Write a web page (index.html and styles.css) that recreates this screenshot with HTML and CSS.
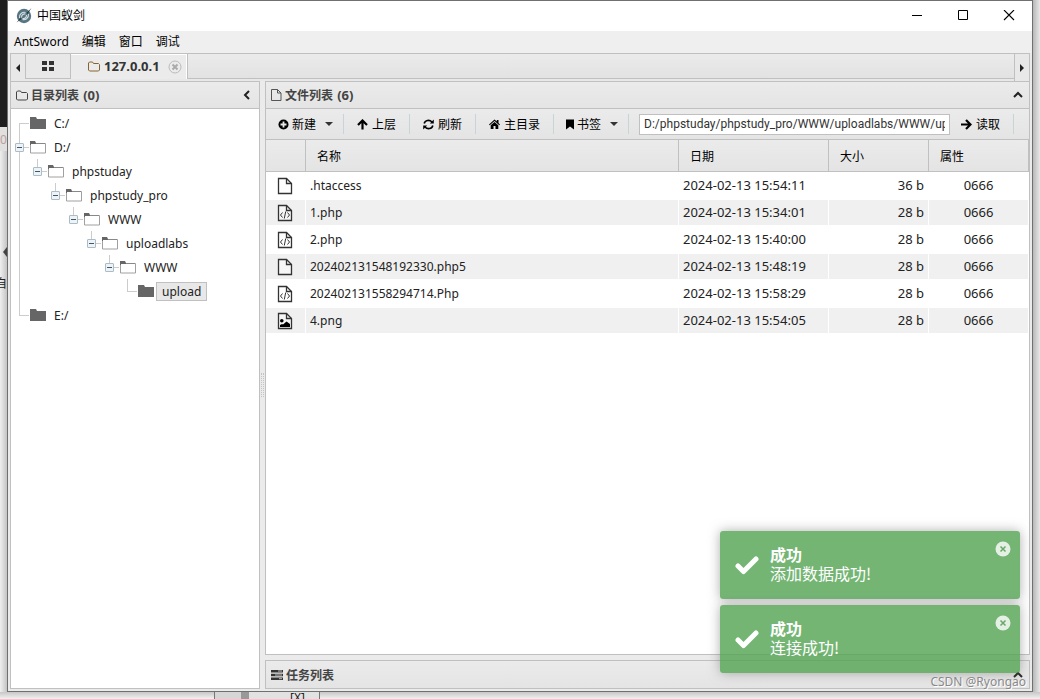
FILE: index.html
```html
<!DOCTYPE html>
<html lang="zh-CN">
<head>
<meta charset="utf-8">
<title>中国蚁剑</title>
<link rel="stylesheet" href="styles.css">
</head>
<body>
<svg class="defs" width="0" height="0" aria-hidden="true">
  <symbol id="folder-open" viewBox="0 0 16 13"><path d="M.5 2.500h15V12H.5z" fill="#fff" stroke="#a0a0a0"/><path d="M0 0h5l1 2v1H1v1H0z" fill="#666"/><path d="M6 2.500h9" stroke="#888"/></symbol>
  <symbol id="folder-closed" viewBox="0 0 16 13"><path d="M0 0h6l1 2h9v10H0z" fill="#666"/></symbol>
  <symbol id="folder-line" viewBox="0 0 12 11"><path d="M.5 9V2l1-1h3l1 1.500h5l1 1V9l-1 1h-9z" fill="none" stroke="currentColor"/></symbol>
  <symbol id="file" viewBox="0 0 16 18"><path d="M1.500 1.500h8l5 5v10h-13z" fill="#fff" fill-opacity=".4" stroke="#333" stroke-width="1.300"/><path d="M9.500 1.500v5h5" fill="none" stroke="#333" stroke-width="1.300"/></symbol>
  <symbol id="code" viewBox="0 0 16 18"><use href="#file"/><path d="M5.500 8.500L3.500 11l2 2.500M10.500 8.500l2 2.500-2 2.500M8.700 7.500l-1.400 7" fill="none" stroke="#333"/></symbol>
  <symbol id="image" viewBox="0 0 16 18"><use href="#file"/><circle cx="4.800" cy="8.700" r="1.800"/><path d="M3 15v-2l2-1 1 .5 3.500-3L13 12v3z"/></symbol>
  <symbol id="caret" viewBox="0 0 8 4"><path d="M0 0h8L4 4z" fill="#333"/></symbol>
  <symbol id="check" viewBox="0 0 24 20"><path d="M3 11l5.500 5.500L21 4" fill="none" stroke="#fff" stroke-width="5" stroke-linecap="round" stroke-linejoin="round"/></symbol>
  <symbol id="cross" viewBox="0 0 16 16"><circle cx="8" cy="8" r="7.500" fill="#fff" fill-opacity=".8"/><path d="M5.500 5.500l5 5m0-5l-5 5" stroke="#6aa86a" stroke-width="1.500"/></symbol>
</svg>
<div class="desktop">
  <div class="edge edge-left"><span class="faint">0a</span><svg width="7" height="12" viewBox="0 0 7 12"><path d="M7 1v10L3 6z" fill="#444"/></svg><span>自</span></div>
  <main class="window">
    <header class="titlebar">
      <svg class="logo" width="16" height="16" viewBox="0 0 16 16"><circle cx="8" cy="8" r="7.200" fill="#587582"/><path d="M3.500 10C3 5.500 7 3.500 9.500 4.500M12.500 6c.5 4.500-3.500 6.500-6 5.500M5.500 9.500c0-3 2-4 4-3.500M10.500 7c0 3-2 4-4 3.500" fill="none" stroke="#d5e0e5" stroke-width="1.100"/><path d="M.5 14.500L4.500 10l1 1zM10.500 5L15.500 0l-4 6z" fill="#26343b"/></svg>
      <h1>中国蚁剑</h1>
      <div class="winbuttons">
        <button aria-label="最小化"><svg width="12" height="12" viewBox="0 0 12 12"><path d="M1 5.500h10" stroke="#000"/></svg></button>
        <button aria-label="最大化"><svg width="12" height="12" viewBox="0 0 12 12"><path d="M1.500.5h9v9h-9z" fill="none" stroke="#000"/></svg></button>
        <button aria-label="关闭"><svg width="12" height="12" viewBox="0 0 12 12"><path d="M1 0l10 10M11 0L1 10" stroke="#000" stroke-width="1.100"/></svg></button>
      </div>
    </header>
    <nav class="menubar"><button>AntSword</button><button>编辑</button><button>窗口</button><button>调试</button></nav>
    <div class="workspace">
      <div class="tabbar">
        <button class="scroll" aria-label="向左"><svg width="4" height="8" viewBox="0 0 4 8"><path d="M4 0v8L0 4z" fill="#222"/></svg></button>
        <button class="tab home" aria-label="主页"><svg width="12" height="10" viewBox="0 0 12 10"><path d="M0 0h5v4H0zM7 0h5v4H7zM0 6h5v4H0zM7 6h5v4H7z" fill="#333"/></svg></button>
        <div class="tab active"><svg class="orange" width="12" height="11"><use href="#folder-line"/></svg><b>127.0.0.1</b><button class="tab-close" aria-label="关闭标签"><svg width="14" height="14" viewBox="0 0 14 14"><circle cx="7" cy="7" r="6" fill="none" stroke="#bbb"/><path d="M4.500 4.500l5 5m0-5l-5 5" stroke="#aaa" stroke-width="2"/></svg></button></div>
        <div class="tabfill"></div>
        <button class="scroll next" aria-label="向右"><svg width="4" height="8" viewBox="0 0 4 8"><path d="M0 0v8l4-4z" fill="#222"/></svg></button>
      </div>
      <div class="panels">
        <section class="panel tree-panel">
          <header class="panel-head"><svg width="12" height="11"><use href="#folder-line"/></svg><h2>目录列表 <span>(0)</span></h2><button class="collapse" aria-label="折叠"><svg width="10" height="10" viewBox="0 0 10 10"><path d="M6 1L2 5l4 4" fill="none" stroke="#222" stroke-width="2"/></svg></button></header>
          <ul class="tree">
            <li><i class="cell down side"></i><svg class="folder"><use href="#folder-closed"/></svg><span class="label">C:/</span></li>
            <li><i class="cell full side"><button aria-label="折叠"></button></i><svg class="folder"><use href="#folder-open"/></svg><span class="label">D:/</span></li>
            <li><i class="cell full"></i><i class="cell up side"><button aria-label="折叠"></button></i><svg class="folder"><use href="#folder-open"/></svg><span class="label">phpstuday</span></li>
            <li><i class="cell full"></i><i class="cell"></i><i class="cell up side"><button aria-label="折叠"></button></i><svg class="folder"><use href="#folder-open"/></svg><span class="label">phpstudy_pro</span></li>
            <li><i class="cell full"></i><i class="cell"></i><i class="cell"></i><i class="cell up side"><button aria-label="折叠"></button></i><svg class="folder"><use href="#folder-open"/></svg><span class="label">WWW</span></li>
            <li><i class="cell full"></i><i class="cell"></i><i class="cell"></i><i class="cell"></i><i class="cell up side"><button aria-label="折叠"></button></i><svg class="folder"><use href="#folder-open"/></svg><span class="label">uploadlabs</span></li>
            <li><i class="cell full"></i><i class="cell"></i><i class="cell"></i><i class="cell"></i><i class="cell"></i><i class="cell up side"><button aria-label="折叠"></button></i><svg class="folder"><use href="#folder-open"/></svg><span class="label">WWW</span></li>
            <li><i class="cell full"></i><i class="cell"></i><i class="cell"></i><i class="cell"></i><i class="cell"></i><i class="cell"></i><i class="cell up side"></i><svg class="folder"><use href="#folder-closed"/></svg><span class="label selected">upload</span></li>
            <li><i class="cell up side"></i><svg class="folder"><use href="#folder-closed"/></svg><span class="label">E:/</span></li>
          </ul>
        </section>
        <div class="splitter"><span></span></div>
        <div class="right">
          <section class="panel files">
            <header class="panel-head"><svg width="11" height="12" viewBox="0 0 11 12"><path d="M.5.5h6l3.500 3.500v7.500H.5zM6.500.5V4H10" fill="none" stroke="#555"/></svg><h2>文件列表 <span>(6)</span></h2><button class="collapse" aria-label="折叠"><svg width="10" height="8" viewBox="0 0 10 8"><path d="M1 6l4-4 4 4" fill="none" stroke="#222" stroke-width="2"/></svg></button></header>
            <div class="toolbar">
              <button class="tool menu"><svg width="11" height="11" viewBox="0 0 11 11"><circle cx="5.500" cy="5.500" r="5"/><path d="M5.500 2.500v6m-3-3h6" stroke="#e8e8e8" stroke-width="1.800"/></svg>新建<svg class="caret" width="8" height="4"><use href="#caret"/></svg></button>
              <button class="tool"><svg width="11" height="11" viewBox="0 0 11 11"><path d="M5.500 10.500V2M1 6l4.500-4.500L10 6" fill="none" stroke="#000" stroke-width="2.200"/></svg>上层</button>
              <button class="tool"><svg width="11" height="11" viewBox="0 0 11 11"><path d="M1.200 4.500C2 1 6.500.3 9 3M9.800 6.500C9 10 4.500 10.700 2 8" fill="none" stroke="#000" stroke-width="1.600"/><path d="M10.800.5v4h-4zM.2 10.500v-4h4z"/></svg>刷新</button>
              <button class="tool"><svg width="11" height="11" viewBox="0 0 11 11"><path d="M0 5.500L5.500.5 7.800 2.500V1h1.700v3L11 5.500l-.7.800L5.500 2 .7 6.300z"/><path d="M1.700 6.300L5.500 3l3.800 3.300V10H6.500V7h-2v3H1.700z"/></svg>主目录</button>
              <button class="tool menu"><svg width="8" height="11" viewBox="0 0 8 11"><path d="M0 .5h8v10L4 7.500l-4 3z"/></svg>书签<svg class="caret" width="8" height="4"><use href="#caret"/></svg></button>
              <input class="path" aria-label="路径" value="D:/phpstuday/phpstudy_pro/WWW/uploadlabs/WWW/upload/">
              <button class="tool read"><svg width="11" height="11" viewBox="0 0 11 11"><path d="M0 5.500h9M5 1l4.500 4.500L5 10" fill="none" stroke="#000" stroke-width="2.200"/></svg>读取</button>
            </div>
            <table>
              <colgroup><col class="c-icon"><col><col class="c-date"><col class="c-size"><col class="c-attr"></colgroup>
              <thead><tr><th></th><th>名称</th><th>日期</th><th>大小</th><th>属性</th></tr></thead>
              <tbody>
                <tr><td><svg><use href="#file"/></svg></td><td>.htaccess</td><td>2024-02-13 15:54:11</td><td>36 b</td><td>0666</td></tr>
                <tr><td><svg><use href="#code"/></svg></td><td>1.php</td><td>2024-02-13 15:34:01</td><td>28 b</td><td>0666</td></tr>
                <tr><td><svg><use href="#code"/></svg></td><td>2.php</td><td>2024-02-13 15:40:00</td><td>28 b</td><td>0666</td></tr>
                <tr><td><svg><use href="#file"/></svg></td><td>202402131548192330.php5</td><td>2024-02-13 15:48:19</td><td>28 b</td><td>0666</td></tr>
                <tr><td><svg><use href="#code"/></svg></td><td>202402131558294714.Php</td><td>2024-02-13 15:58:29</td><td>28 b</td><td>0666</td></tr>
                <tr><td><svg><use href="#image"/></svg></td><td>4.png</td><td>2024-02-13 15:54:05</td><td>28 b</td><td>0666</td></tr>
              </tbody>
            </table>
          </section>
          <section class="panel tasks">
            <header class="panel-head"><svg width="12" height="10" viewBox="0 0 12 10"><path d="M0 0h12v2.500H0zM0 3.700h12v2.500H0zM0 7.400h12V10H0z" fill="#333"/><path d="M7 1h4M4 5h7M8 8.700h3" stroke="#bbb"/></svg><h2>任务列表</h2><button class="collapse" aria-label="展开"><svg width="10" height="8" viewBox="0 0 10 8"><path d="M1 6l4-4 4 4" fill="none" stroke="#222" stroke-width="2"/></svg></button></header>
          </section>
        </div>
      </div>
    </div>
  </main>
  <div class="edge edge-right"></div>
  <div class="edge edge-bottom"><span>[X]</span></div>
</div>
<div class="toasts">
  <div class="toast" role="status"><svg width="24" height="20"><use href="#check"/></svg><div class="message"><strong>成功</strong><p>添加数据成功!</p></div><button aria-label="关闭通知"><svg width="16" height="16"><use href="#cross"/></svg></button></div>
  <div class="toast" role="status"><svg width="24" height="20"><use href="#check"/></svg><div class="message"><strong>成功</strong><p>连接成功!</p></div><button aria-label="关闭通知"><svg width="16" height="16"><use href="#cross"/></svg></button></div>
</div>
<div class="watermark">CSDN @Ryongao</div>
</body>
</html>
```
FILE: styles.css
```css
* { box-sizing: border-box; }
body { margin: 0; color: #222; font: 12px "Noto Sans", "Noto Sans CJK SC", sans-serif; overflow: hidden; }
button { margin: 0; padding: 0; border: 0; background: none; color: inherit; font: inherit; }
h1, h2, p, ul { margin: 0; padding: 0; }
svg { display: block; flex: none; }
.defs { position: absolute; }

.desktop { display: grid; grid-template: minmax(0, 1fr) 7px / 7px minmax(0, 1fr) 7px; height: 100vh; background: #e4e4e4; }
.edge { overflow: hidden; }
.edge-left { display: flex; flex-direction: column; align-items: flex-end; padding-top: 132px; line-height: 16px; background: linear-gradient(#1e1e1e 127px, #e2dfdf 127px, #e2dfdf 151px, transparent 151px), linear-gradient(90deg, #f0f0f0, #c4c4c4); }
.edge-left .faint { align-self: flex-start; margin-bottom: 98px; color: #b8a0a0; }
.edge-left svg { margin-bottom: 18px; }
.edge-right { background: linear-gradient(90deg, #b8b8b8, #e8e8e8); }
.edge-bottom { display: flex; grid-column: 1 / -1; padding-left: 214px; background: linear-gradient(#c8c8c8, #f2f2f2); }
.edge-bottom span { width: 106px; padding-left: 75px; border: solid #777; border-width: 0 1px; background: linear-gradient(90deg, #d6d6d6 26px, #999 26px, #999 34px, #e2e2e2 34px); line-height: 11px; }

.window { display: flex; flex-direction: column; min-width: 0; border: 1px solid #707070; background: #efefef; }
.titlebar { display: flex; align-items: center; height: 30px; padding-left: 8px; background: #fff; color: #000; }
.titlebar h1 { flex: 1; margin-left: 5px; padding-bottom: 2px; font-size: 12px; font-weight: 400; }
.winbuttons { display: flex; }
.winbuttons button { display: grid; place-items: center; width: 46px; height: 28px; }
.menubar { display: flex; gap: 13px; align-items: center; height: 22px; padding: 0 0 2px 6px; color: #000; }
.workspace { display: flex; flex: 1; flex-direction: column; min-height: 0; padding: 0 2px 2px; background: #ebebeb; }

.tabbar { display: flex; height: 28px; border: solid #c0c0c0; border-width: 1px 1px 0; background: #e8e8e8; }
.scroll { display: grid; flex: none; place-items: center; width: 14px; }
.scroll.next { width: 15px; border-left: 1px solid #c0c0c0; }
.tab { display: flex; align-items: center; height: 25px; padding-right: 5px; border: solid #c0c0c0; border-width: 0 1px 1px 0; }
.home { justify-content: center; width: 46px; padding: 0; border-left-width: 1px; }
.tabfill { flex: 1; height: 25px; border-bottom: 1px solid #c0c0c0; background: linear-gradient(#ebebeb, #e2e2e2); }
.active { border-bottom: 0; padding-left: 17px; background: #ebebeb; color: #333; box-shadow: inset -1px 1px #fff; }
.active b { margin: 0 8px 0 4px; padding-bottom: 2px; font-size: 13px; }
.orange { color: #86642c; }

.panels { display: flex; flex: 1; min-height: 0; }
.panel { border: 1px solid #c0c0c0; background: #fff; }
.panel-head { display: flex; align-items: center; gap: 3px; height: 27px; padding: 0 6px 0 5px; border-bottom: 1px solid #c0c0c0; background: linear-gradient(#ebebeb, #e4e4e4); color: #444; }
.panel-head h2 { flex: 1; font-size: 12px; }
.panel-head h2 span { padding-left: 1px; font-size: 13px; }
.tree-panel { flex: none; width: 250px; }
.splitter { display: flex; align-items: center; justify-content: center; width: 5px; }
.splitter span { width: 3px; height: 24px; border: dotted #c4c4c4; border-width: 0 1px; }
.right { display: flex; flex: 1; flex-direction: column; gap: 5px; min-width: 0; }
.files { flex: 1; min-height: 0; }
.tasks .panel-head { border-bottom: 0; }

.tree { padding-top: 2px; list-style: none; font-size: 12px; }
.tree li { display: flex; align-items: center; height: 24px; }
.cell { display: grid; place-items: center; width: 18px; height: 24px; --line: linear-gradient(#ccc, #ccc); }
.cell.full { background: var(--line) 8px 0 / 1px 24px no-repeat; }
.cell.side { background: var(--line) 8px 0 / 1px 12px no-repeat, var(--line) 8px 12px / 10px 1px no-repeat; }
.cell.side.full { background: var(--line) 8px 0 / 1px 24px no-repeat, var(--line) 8px 12px / 10px 1px no-repeat; }
.cell.side.down { background: var(--line) 8px 12px / 1px 12px no-repeat, var(--line) 8px 12px / 10px 1px no-repeat; }
.cell button { width: 9px; height: 9px; margin-right: 1px; border: 1px solid #a9bcc8; border-radius: 1px; background: linear-gradient(#456, #456) center / 5px 1px no-repeat #edf3f6; }
.folder { width: 16px; height: 13px; margin: 0 2px 0 1px; }
.label { height: 19px; padding: 0 5px; border: 1px solid transparent; line-height: 17px; }
.selected { border-color: #c0c0c0; background: #e8e8e8; }

.toolbar { display: flex; align-items: center; height: 31px; border-bottom: 1px solid #c0c0c0; background: linear-gradient(#ebebeb, #e4e4e4); color: #000; }
.tool { display: flex; gap: 4px; align-items: center; height: 20px; padding: 0 13px; border-right: 1px solid #c7d5da; white-space: nowrap; }
.tool.menu { gap: 3px; padding: 0 10px 0 12px; }
.caret { margin-left: 6px; }
.path { flex: 1; min-width: 0; height: 21px; margin-left: 10px; padding: 0 4px; border: 1px solid #c0c0c0; background: #fff; color: #333; font: 12px Roboto, sans-serif; }
.tool.read { margin-right: 15px; padding: 0 13px 0 11px; }

table { width: 100%; border-collapse: separate; border-spacing: 0; table-layout: fixed; font-size: 13px; }
.c-icon { width: 40px; }
.c-date { width: 150px; }
.c-size, .c-attr { width: 100px; }
th { height: 32px; padding: 0 0 0 11px; border: solid #c0c0c0; border-width: 0 1px 1px 0; background: linear-gradient(#ebebeb, #e4e4e4); color: #000; font-size: 12px; font-weight: 400; text-align: left; }
td { height: 27px; padding: 0 4px 2px; border: 1px solid #fff; border-left: 0; line-height: 18px; }
tbody tr:nth-child(even) td { background: #f0f0f0; }
td:first-child { padding: 0 0 0 11px; }
td:nth-child(2) { padding-bottom: 0; font-size: 12px; }
td:nth-child(4) { text-align: right; }
td:nth-child(5) { text-align: center; }
td svg { width: 16px; height: 18px; }

.toasts { position: absolute; right: 20px; bottom: 26px; display: grid; gap: 6px; width: 300px; }
.toast { display: flex; gap: 11px; align-items: center; height: 68px; padding: 0 9px 0 15px; border-radius: 3px; background: rgba(81, 163, 81, .8); box-shadow: 0 0 12px rgba(120, 120, 120, .6); color: #fff; font: 16px/19px "Noto Sans CJK SC", sans-serif; }
.message { flex: 1; padding-bottom: 2px; }
.message strong { display: block; }
.toast > button { align-self: flex-start; margin-top: 10px; }
.watermark { position: absolute; right: 14px; bottom: 8px; color: #888; font: 12px/18px "Noto Sans", sans-serif; text-shadow: 1px 1px #fff; }
```
